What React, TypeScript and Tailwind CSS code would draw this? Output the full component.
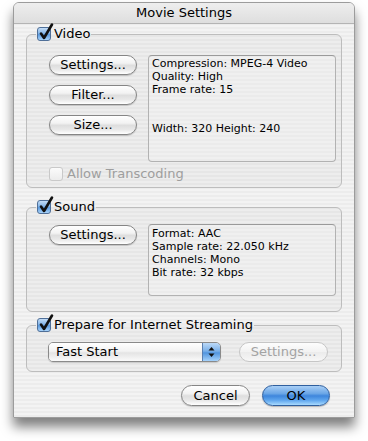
import React from "react";

const stripes =
  "bg-[repeating-linear-gradient(180deg,#ececec_0px,#ececec_2px,#f3f3f3_2px,#f3f3f3_4px)]";

function Check({ disabled }: { disabled?: boolean }) {
  return (
    <span
      className={
        "relative inline-block w-[14px] h-[14px] shrink-0 rounded-[3px] border " +
        (disabled
          ? "border-[#c9c9c9] bg-[linear-gradient(#fbfbfb,#ececec)]"
          : "border-[#4f6f98] bg-[linear-gradient(#c4ddf7,#82b3e6_45%,#5b9ade_55%,#a8d3fa)]")
      }
    >
      {!disabled && (
        <svg className="absolute left-[0px] top-[-5px] overflow-visible" width="16" height="17" viewBox="0 0 16 17">
          <path d="M3 10.5 L6 15 L14 1.5" stroke="#111" strokeWidth="2.6" fill="none" strokeLinecap="round" strokeLinejoin="round" />
        </svg>
      )}
    </span>
  );
}

function Btn({ children, w, disabled }: { children: React.ReactNode; w: string; disabled?: boolean }) {
  return (
    <div
      className={
        "h-[20px] rounded-full border flex items-center justify-center text-[13px] " +
        w +
        (disabled
          ? " border-[#c6c6c6] text-[#a3a3a3] bg-[linear-gradient(#fdfdfd,#f2f2f2_50%,#ebebeb_51%,#f7f7f7)]"
          : " border-[#858585] text-black bg-[linear-gradient(#ffffff,#f2f2f2_40%,#dedede_52%,#e8e8e8_75%,#ffffff)] shadow-[0_1px_1px_rgba(0,0,0,0.18)]")
      }
    >
      {children}
    </div>
  );
}

function Group({ label, children, className }: { label: string; children: React.ReactNode; className: string }) {
  return (
    <fieldset className={"mx-[12px] border border-[#bdbdbd] rounded-[6px] bg-black/[0.025] " + className}>
      <legend className="ml-[9px] px-[1px] h-[14px]">
        <span className="flex items-center gap-[3px] h-[14px] text-[13px] text-black">
          <Check />
          {label}
        </span>
      </legend>
      {children}
    </fieldset>
  );
}

export default function App() {
  return (
    <div className="h-[441px] bg-white pt-[2px] pl-[13px] font-['DejaVu_Sans',sans-serif]">
      <div className={"w-[342px] h-[416px] rounded-t-[6px] border border-[#9c9c9c] shadow-[0_9px_12px_rgba(0,0,0,0.5)] flex flex-col " + stripes}>
        <div className="h-[21px] shrink-0 rounded-t-[5px] border-b border-[#b4b4b4] bg-[linear-gradient(#eeeeee,#dedede)] flex items-center justify-center text-[13px] text-black">
          Movie Settings
        </div>

        <Group label="Video" className="mt-[3px]">
          <div className="pl-[22px] pt-[14px] pb-[6px]">
            <div className="flex gap-[11px]">
              <div className="flex flex-col gap-[10px]">
                <Btn w="w-[88px]">Settings...</Btn>
                <Btn w="w-[88px]">Filter...</Btn>
                <Btn w="w-[88px]">Size...</Btn>
              </div>
              <div className="w-[188px] h-[107px] rounded-[4px] border border-[#b2b2b2] border-t-[#9a9a9a] bg-white/20 pl-[3px] pt-[1px] text-[11px] leading-[13px] text-black">
                <div>Compression: MPEG-4 Video</div>
                <div>Quality: High</div>
                <div>Frame rate: 15</div>
                <div>&nbsp;</div>
                <div>&nbsp;</div>
                <div>Width: 320 Height: 240</div>
              </div>
            </div>
            <div className="mt-[5px] h-[14px] flex items-center gap-[4px] text-[13px] text-[#9e9e9e]">
              <Check disabled />
              Allow Transcoding
            </div>
          </div>
        </Group>

        <Group label="Sound" className="mt-[12px]">
          <div className="pl-[22px] pt-[10px] pb-[15px] flex gap-[11px]">
            <div className="pt-[1px]">
              <Btn w="w-[88px]">Settings...</Btn>
            </div>
            <div className="w-[188px] h-[72px] rounded-[4px] border border-[#b2b2b2] border-t-[#9a9a9a] bg-white/20 pl-[3px] pt-[2px] text-[11px] leading-[13px] text-black">
              <div>Format: AAC</div>
              <div>Sample rate: 22.050 kHz</div>
              <div>Channels: Mono</div>
              <div>Bit rate: 32 kbps</div>
            </div>
          </div>
        </Group>

        <Group label="Prepare for Internet Streaming" className="mt-[6px]">
          <div className="pl-[21px] pt-[10px] pb-[9px] flex items-center gap-[18px]">
            <div className="w-[173px] h-[20px] rounded-[5px] border border-[#8a8a8a] flex overflow-hidden shadow-[0_1px_1px_rgba(0,0,0,0.15)]">
              <div className="flex-1 flex items-center pl-[7px] text-[13px] text-black bg-[linear-gradient(#ffffff,#f3f3f3_45%,#e4e4e4_55%,#fafafa)]">
                Fast Start
              </div>
              <div className="w-[18px] border-l border-[#5a7fb0] flex items-center justify-center bg-[linear-gradient(#bcd9f7,#79afe8_45%,#5295de_55%,#a6d2fb)]">
                <svg width="7" height="12" viewBox="0 0 7 12">
                  <path d="M3.5 1 L6.5 4.5 L0.5 4.5 Z" fill="#111" />
                  <path d="M3.5 11 L6.5 7.5 L0.5 7.5 Z" fill="#111" />
                </svg>
              </div>
            </div>
            <Btn w="w-[89px]" disabled>
              Settings...
            </Btn>
          </div>
        </Group>

        <div className="mt-[13px] pr-[24px] flex justify-end gap-[12px]">
          <div className="w-[69px] h-[21px] rounded-full border border-[#858585] flex items-center justify-center text-[13px] text-black bg-[linear-gradient(#ffffff,#f2f2f2_40%,#dedede_52%,#e8e8e8_75%,#ffffff)] shadow-[0_1px_1px_rgba(0,0,0,0.18)]">
            Cancel
          </div>
          <div className="w-[68px] h-[21px] rounded-full border border-[#2f5f9e] flex items-center justify-center text-[13px] text-black bg-[linear-gradient(#a9cff6,#6aa6e6_40%,#3e86dc_52%,#5fa6ee_75%,#a8dafe)] shadow-[0_1px_1px_rgba(0,0,0,0.25)]">
            OK
          </div>
        </div>
      </div>
    </div>
  );
}
